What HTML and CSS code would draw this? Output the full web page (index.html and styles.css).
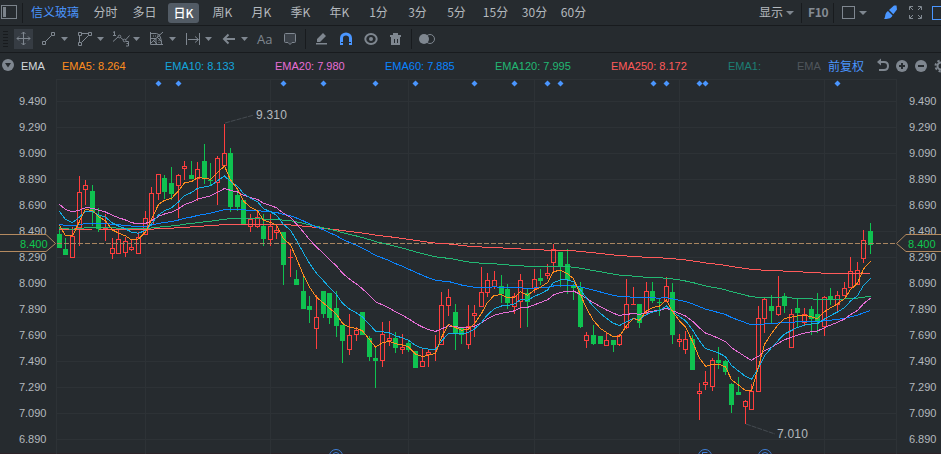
FILE: index.html
```html
<!DOCTYPE html>
<html lang="zh-CN">
<head>
<meta charset="utf-8">
<title>信义玻璃</title>
<link rel="stylesheet" href="styles.css">
</head>
<body>
<header class="tabs">
  <svg class="panel-icon" width="18" height="25"><rect x="1.5" y="5.5" width="15" height="13" fill="none" stroke="#7b838b"/><path d="M3 7h3v10h-3z" fill="#7b838b"/></svg>
  <i class="sep first"></i>
  <span class="stock">信义玻璃</span>
  <nav class="periods">
    <span>分时</span><span>多日</span><span class="on"><b>日K</b></span><span>周K</span><span>月K</span><span>季K</span><span>年K</span><span>1分</span><span>3分</span><span>5分</span><span>15分</span><span>30分</span><span>60分</span>
  </nav>
  <div class="right">
    <span class="show">显示</span><i class="caret"></i>
    <i class="sep s1"></i><span class="f10">F10</span><i class="sep s2"></i>
    <i class="square"></i><i class="caret c2"></i>
    <svg class="brush" width="14" height="15" viewBox="0 0 14 15"><path d="M0 14C2 12 0 9 4 6L8.500 10.500C7 14 3 14 0 14zM5 5L10 .5l2.500 0 .5 4L9.300 9.300z" fill="#4a96ff"/></svg>
    <svg class="expand" width="14" height="14" viewBox="0 0 14 14" fill="none" stroke="#828a92"><path d="M.5 4V.5H4M1 1l3 3M9 .5h3.500V4M12 1L9 4M.5 9v3.500H4M1 12l3-3M9 12.500h3.500V9M12 12L9 9"/></svg>
    <i class="bluebox"></i>
  </div>
</header>

<div class="tools">
  <svg width="941" height="26" viewBox="0 26 941 26" fill="none" stroke="#7f8790">
    <path d="M3 31.500h5M3 34.500h5M3 37.500h5M3 40.500h5M3 43.500h5M3 46.500h5" stroke="#181b1e"/>
    <rect x="14" y="29" width="19" height="20" fill="#363c43" stroke="none"/>
    <path d="M17 38.500h13M23.500 32v13M21.500 34l2-2 2 2M21.500 43l2 2 2-2M19 36.500l-2 2 2 2M28 36.500l2 2-2 2"/>
    <path d="M45 42l6.500-6.500M42.500 41.500h3v3h-3zM51.500 32.500h3v3h-3z"/>
    <path d="M82 33.500h6M79.500 36v6M82 42l6.500-6.500M78.500 32.500h3v3h-3zM88.500 32.500h3v3h-3zM78.500 42.500h3v3h-3z"/>
    <path d="M113 41.500l5-4.500M120.500 37.500l3 2.500M125.500 40l4-4.500M113 32.500l1.500-1v4.500M113 35.500h3M126 41.500h2.500v4.500h-2.500M126.500 43.500h2"/>
    <circle cx="119.500" cy="36.500" r="1.300"/><circle cx="124.500" cy="40.500" r="1.300"/>
    <path d="M150.500 32v12.500H163M150.500 33.500h6q5 1 5 11M151 43l12-11M151 38.500h5v6M157 37l5 5M153 40l4 4"/><path d="M153 36h6M159 34v9" stroke-dasharray="1 1"/>
    <path d="M186.500 33v12M199.500 33v12M188 39.500h10M195 36.500l3.500 3-3.500 3"/>
    <path d="M224 39h11M228.500 34.500L224 39l4.500 4.500" stroke-width="2"/>
    <g fill="#7f8790" stroke="none"><path d="M61 37h7l-3.500 4zM97 37h7l-3.500 4zM133 37h7l-3.500 4zM169 37h7l-3.500 4zM205 37h7l-3.500 4zM241 37h7l-3.500 4z"/></g>
    <path d="M285.500 33.500h9q1 0 1 1v7q0 1-1 1h-2.500l-2 2-2-2h-2.500q-1 0-1-1v-7q0-1 1-1z" fill="#3b4148"/>
    <path d="M305.500 29v20M411.500 29v20" stroke="#181b1e"/>
    <g fill="#7f8790" stroke="none"><path d="M317 42v-3l6-6 3 3-6 6zM316 43h11v1.500h-11zM390 35h11v2h-11zM391 37h9v8h-9zM393 33h5v2h-5z"/></g>
    <path d="M394.500 39v4M397.500 39v4" stroke="#262b2f"/>
    <path d="M341.500 45v-7a4.500 4 0 0 1 9 0v7" stroke="#4a96ff" stroke-width="3"/><path d="M341 42.500h2M349 42.500h2" stroke="#262b2f"/>
    <ellipse cx="371" cy="39" rx="5.700" ry="4.900" stroke-width="2"/><circle cx="371" cy="39" r="2" fill="#7f8790" stroke="none"/>
    <circle cx="424" cy="39" r="5" fill="#7f8790" stroke="none"/><circle cx="430" cy="39" r="4.500"/>
    <text x="257" y="44" class="aa">Aa</text>
  </svg>
</div>

<div class="legend">
  <svg class="toggle" width="14" height="14"><circle cx="7" cy="6" r="6" fill="#7f8790"/><path d="M4 4h6l-3 4.500z" fill="#262b2f"/></svg>
  <span class="name">EMA</span><span class="e5">EMA5: 8.264</span><span class="e10">EMA10: 8.133</span><span class="e20">EMA20: 7.980</span><span class="e60">EMA60: 7.885</span><span class="e120">EMA120: 7.995</span><span class="e250">EMA250: 8.172</span><span class="e1">EMA1:</span><span class="dim">EMA</span><span class="adj">前复权</span>
  <svg class="acts" width="65" height="16" viewBox="876 58 65 16" fill="none" stroke="#7f8790" stroke-width="2"><path d="M878 62h6q4 0 4 4t-4 4h-5"/><path d="M877 62l4-3.500v7z" fill="#7f8790" stroke="none"/><g fill="#7f8790" stroke="none"><circle cx="902" cy="66" r="6"/><circle cx="921" cy="66" r="6"/></g><path d="M899 66h6M902 63v6M918 66h6" stroke="#262b2f"/><circle cx="941" cy="66" r="3.500"/><circle cx="941" cy="66" r="5.500" stroke-dasharray="2.300 2"/></svg>
</div>

<main class="chart">
  <div class="axis left" id="left"></div>
  <svg id="plot" width="841" height="375" viewBox="56 79 841 375"></svg>
  <div class="axis rightaxis" id="right"></div>
  <svg class="tag tl" width="57" height="19" viewBox="0 0 57 19"><path d="M-1 .5H46L55.500 9.500 46 17.500H-1z"/><text x="20" y="13.500">8.400</text></svg>
  <svg class="tag tr" width="45" height="19" viewBox="0 0 45 19"><path d="M46 .5H10L.5 9.500 10 17.500H46z"/><text x="12" y="13.500">8.400</text></svg>
</main>
<script src="chart.js"></script>
</body>
</html>
```
FILE: styles.css
```css
* { box-sizing: border-box; }
body { margin: 0; width: 941px; height: 454px; overflow: hidden; background: #262b2f; color: #b4b9be; font: 12px "Liberation Sans", "Noto Sans CJK SC", sans-serif; }
.tabs { display: flex; align-items: center; height: 26px; border-bottom: 1px solid #181b1e; font: 12px/22px "Noto Sans CJK SC", sans-serif; white-space: nowrap; }
.panel-icon { flex: none; }
.sep { flex: none; width: 1px; height: 20px; background: #181b1e; }
.first { margin-left: 4px; }
.stock { width: 55px; margin-left: 8px; color: #4a96ff; }
.stock, .periods span, .show, .f10 { padding-bottom: 2px; }
.periods { display: flex; }
.periods span { width: 39px; text-align: center; }
.periods .on { padding: 0; }
.periods b { display: block; width: 31px; height: 20px; margin: 2px auto; border-radius: 3px; background: #525b65; color: #fff; font-weight: 500; line-height: 19px; }
.right { display: flex; align-items: center; margin-left: auto; }
.caret { width: 0; margin: 0 0 0 3px; border: 4px solid transparent; border-top-color: #7f8790; border-bottom: 0; }
.s1 { margin-left: 7px; }
.f10 { width: 20px; margin: 0 5px 0 6px; color: #858c94; font-weight: 700; letter-spacing: -.3px; }
.square { width: 13px; height: 13px; margin-left: 8px; border: 1px solid #7f8790; }
.c2 { margin-left: 4px; }
.brush { margin-left: 17px; }
.expand { margin-left: 11px; }
.bluebox { width: 9px; height: 14px; margin-left: 9px; border: 1px solid #4a96ff; border-right: 0; }
.tools { height: 27px; border-bottom: 1px solid #181b1e; }
.tools svg { display: block; }
.aa { fill: #7f8790; stroke: none; font: 13px "Open Sans", sans-serif; }
.legend { display: grid; grid-template-columns: 21px 41px 103px 110px 110px 110px 116px 117px 69px 31px 48px 65px; align-items: center; height: 26px; font-size: 11px; white-space: nowrap; }
.toggle { margin-left: 1px; }
.name { color: #d4d8dc; }
.e5 { color: #ff8d1e; }
.e10 { color: #14a5dc; }
.e20 { color: #e66ed6; }
.e60 { color: #0a84ff; }
.e120 { color: #22b873; }
.e250 { color: #ff5a5a; }
.e1 { color: #1d7f74; }
.dim { color: #50565c; }
.adj { padding-bottom: 2px; color: #4a96ff; font: 12px "Noto Sans CJK SC", sans-serif; }
.chart { position: relative; display: grid; grid-template-columns: 56px 841px 44px; height: 375px; border-bottom: 1px solid #2c2227; }
.axis { padding-top: 9px; font-size: 11px; line-height: 26px; letter-spacing: -.05px; }
.left { padding-left: 19px; }
.rightaxis { padding-left: 12px; }
.tag { position: absolute; top: 155px; }
.tl { left: 0; }
.tr { left: 896px; }
.tag path { fill: #262b2f; stroke: #b48a60; }
.tag text { fill: #10c850; font-size: 11px; }
.callout { fill: #b4b9be; font-size: 12px; letter-spacing: .2px; }
```
FILE: chart.js
```js
// Candles: kind (R rising, G falling), wick top, body top, body bottom, wick bottom.
const raw = `G 227 234 248 248|G 238 249 255 255|R 227 236 258 258|R 176 192 228 246|R 180 185 190 205|G 185 191 212 226|G 208 215 229 232|R 214 228 229 241|R 238 248 254 259|R 230 239 254 254|R 237 241 253 257|R 239 247 250 251|R 232 237 254 254|R 211 218 235 235|R 187 193 225 225|R 174 174 194 200|G 175 178 192 199|G 167 183 194 200|R 174 175 186 218|R 161 166 169 180|G 161 175 179 179|R 162 169 179 201|G 144 161 179 184|G 163 180 181 186|R 156 158 183 205|R 124 153 166 166|G 148 153 207 212|G 188 195 207 211|G 200 200 225 225|R 214 219 227 232|R 210 217 227 228|G 214 226 239 246|R 214 226 240 246|R 224 230 233 239|G 232 232 265 285|R 249 257 258 277|G 270 279 285 285|G 274 291 309 309|G 296 306 310 323|R 295 317 329 349|G 291 291 314 318|G 293 293 318 324|G 291 308 326 337|G 325 325 341 363|R 314 335 350 355|R 327 330 335 341|G 312 312 335 335|G 336 338 357 361|G 347 358 361 388|R 322 334 361 367|R 321 338 341 346|G 332 338 348 353|R 334 347 350 354|G 340 343 350 352|G 351 351 368 368|R 349 361 367 367|R 349 352 355 367|R 335 349 350 361|R 292 305 345 345|R 289 297 306 316|G 304 312 334 350|G 328 328 335 344|R 305 326 345 349|R 305 313 316 337|R 267 292 307 307|R 273 280 293 297|R 271 280 287 289|G 275 286 294 303|G 284 289 303 309|R 293 296 307 314|R 274 280 302 328|G 288 293 302 327|R 269 279 289 293|G 269 278 281 285|R 264 273 276 279|R 244 249 263 272|G 252 252 267 287|G 249 264 280 294|G 284 285 288 300|G 282 288 327 328|R 332 335 341 348|G 325 335 344 345|G 336 336 344 344|R 332 340 346 346|G 340 340 345 352|R 334 335 345 346|R 279 304 328 329|R 287 304 305 305|G 304 304 323 328|R 282 291 314 314|G 282 291 301 303|G 298 302 303 316|R 277 286 302 302|G 283 292 335 344|R 334 339 342 347|R 331 339 350 354|G 335 339 370 370|R 383 391 394 420|R 371 382 385 390|R 358 360 387 391|G 347 360 363 369|G 360 361 372 375|G 383 384 405 413|G 377 392 395 395|R 400 401 407 424|R 384 391 410 410|R 306 318 392 392|R 297 299 319 333|G 295 306 311 323|R 276 306 315 316|G 293 296 306 313|R 309 314 348 348|G 299 308 313 327|R 308 314 323 325|G 306 309 319 335|G 293 314 322 333|R 296 297 327 336|G 288 296 300 305|R 291 295 305 313|R 282 288 296 296|R 257 271 288 288|R 262 270 285 285|R 230 240 259 263|G 223 231 245 254`;
const data = raw.split('|').map(s => { const [k, ...v] = s.split(' '); return [k, ...v.map(Number)]; });
const px = i => Math.floor(59.3 + 6.595 * i);
const rect = (x, y, w, h, c) => `<rect x="${x}" y="${y}" width="${w}" height="${h}" fill="${c}"/>`;
let out = '';
for (let y = 101; y < 450; y += 26) out += rect(56, y, 841, 1, '#2d3236');
out += rect(56, 79, 841, 1, '#2d3236');
for (const x of [56, 145, 270, 408, 534, 679, 824, 896]) out += rect(x, 79, 1, 375, '#2d3236');

data.forEach(([k, h, t, b, l], i) => {
  const x = px(i), c = k === 'R' ? '#ff3e3e' : '#0fc250';
  if (k === 'G') {
    out += rect(x, h, 1, l - h, c) + rect(x - 2, t, 5, b - t, c);
  } else {
    out += rect(x, h, 1, t - h, c) + rect(x, b, 1, l - b, c);
    out += b - t > 1 ? `<rect x="${x - 1.5}" y="${t + .5}" width="4" height="${b - t - 1}" fill="none" stroke="${c}" shape-rendering="crispEdges"/>` : rect(x - 2, t, 5, 1, c);
  }
});
out += '<path d="M57 243.5H896" stroke="#a88560" stroke-dasharray="5 2"/>';

const emas = [[250, 229, '#ff5a5a'], [120, 228, '#22b873'], [60, 224, '#0a84ff'], [20, 204, '#e66ed6'], [10, 211, '#14aee6'], [5, 225, '#ff8d1e']];
for (const [n, start, c] of emas) {
  let v = start;
  const pts = data.map(([k, h, t, b], i) => {
    if (i) v += 2 / (n + 1) * ((k === 'R' ? t : b) - v);
    return `${px(i) + .5},${(v + .5).toFixed(1)}`;
  });
  out += `<polyline points="${pts.join(' ')}" fill="none" stroke="${c}" shape-rendering="crispEdges"/>`;
}
for (const x of [158, 178, 283, 323, 375, 415, 474, 514, 547, 560, 653, 666, 699, 705, 837])
  out += `<path d="M${x + .5} 80.500l3 3-3 3-3-3z" fill="#4a96ff"/>`;
out += '<path d="M225 123l29-8M746 424l29 10" stroke="#454b51" stroke-dasharray="5 1"/>';
out += '<text class="callout" x="256" y="119">9.310</text><text class="callout" x="777" y="438">7.010</text>';
for (const x of [336, 705, 765])
  out += `<circle cx="${x}" cy="456" r="6.500" fill="none" stroke="#3f7fd8"/>` + (x === 705 ? '<path d="M702.500 456v-3.500h5" fill="none" stroke="#3f7fd8"/>' : `<circle cx="${x}" cy="456" r="3.500" fill="none" stroke="#3f7fd8"/>`);
document.getElementById('plot').innerHTML = out;

const labels = Array.from({ length: 14 }, (_, i) => `<div>${(9.49 - i * .2).toFixed(3)}</div>`).join('');
document.getElementById('left').innerHTML = labels;
document.getElementById('right').innerHTML = labels;
```
